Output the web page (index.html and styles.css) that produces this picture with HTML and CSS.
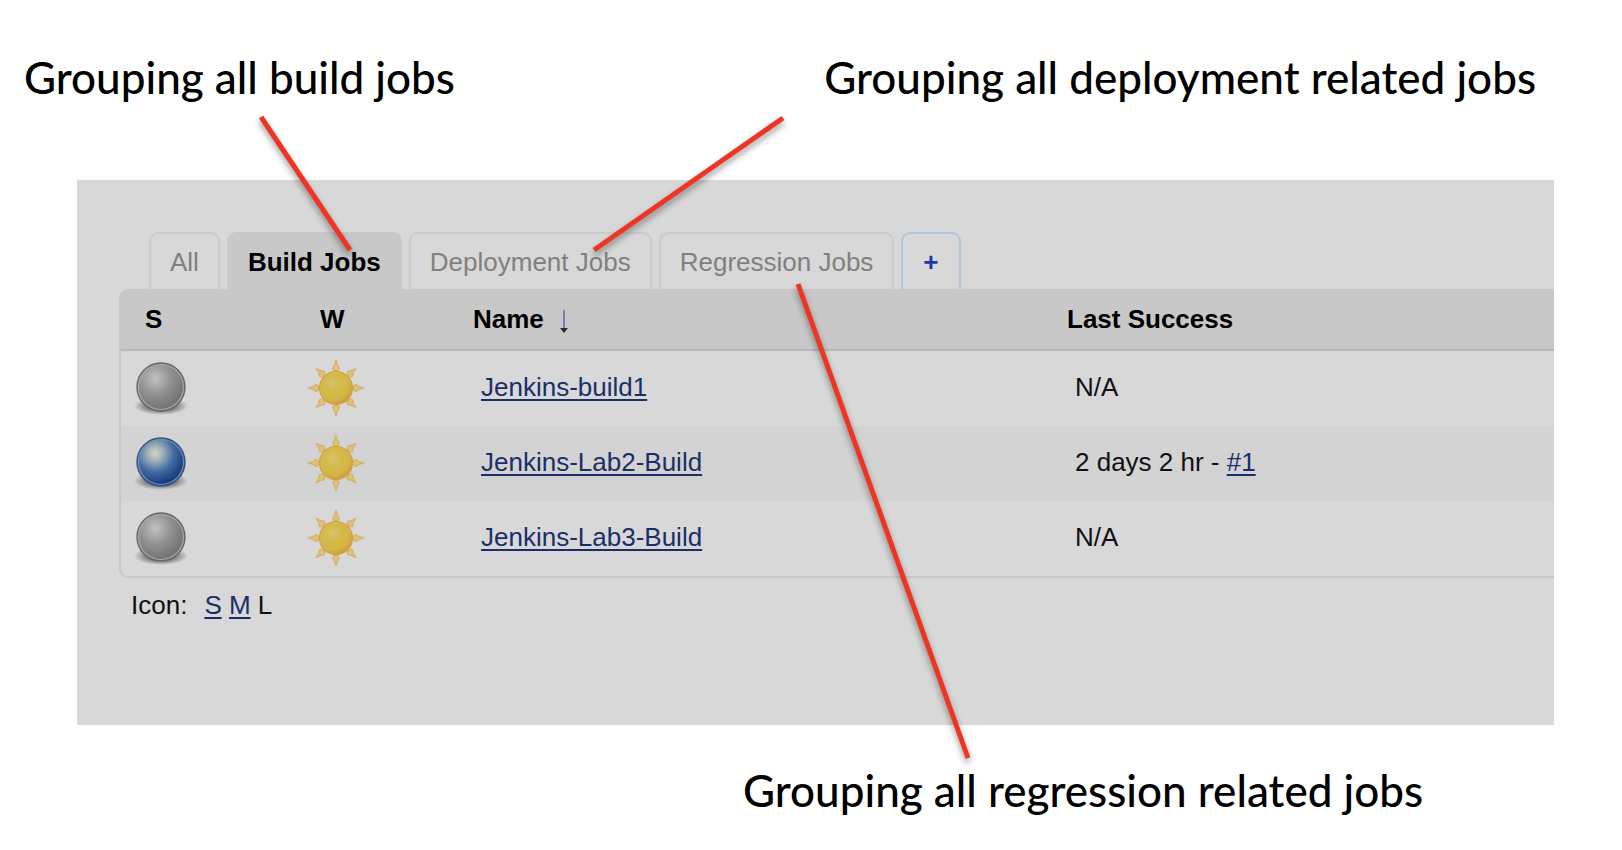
FILE: index.html
```html
<!DOCTYPE html>
<html lang="en">
<head>
<meta charset="utf-8">
<title>Jenkins views</title>
<link rel="stylesheet" href="styles.css">
</head>
<body>
<svg class="defs" width="0" height="0" aria-hidden="true">
  <defs>
    <radialGradient id="grey" cx="0.38" cy="0.32" r="0.65">
      <stop offset="0" stop-color="#c2c2c2"/>
      <stop offset="0.5" stop-color="#929292"/>
      <stop offset="1" stop-color="#727272"/>
    </radialGradient>
    <radialGradient id="blue" cx="0.38" cy="0.32" r="0.65">
      <stop offset="0" stop-color="#d6d6bc"/>
      <stop offset="0.25" stop-color="#9eb0b8"/>
      <stop offset="0.6" stop-color="#426aa2"/>
      <stop offset="1" stop-color="#173a7c"/>
    </radialGradient>
    <radialGradient id="sunfill" cx="0.4" cy="0.35" r="0.68">
      <stop offset="0" stop-color="#dac468"/>
      <stop offset="0.35" stop-color="#d5bb4c"/>
      <stop offset="0.75" stop-color="#d4b545"/>
      <stop offset="1" stop-color="#cf963a"/>
    </radialGradient>
    <radialGradient id="ground">
      <stop offset="0.5" stop-color="#777"/>
      <stop offset="1" stop-color="#777" stop-opacity="0"/>
    </radialGradient>
    <symbol id="ball-grey" viewBox="0 0 60 60">
      <ellipse cx="30" cy="49" rx="27" ry="9" fill="url(#ground)"/>
      <circle cx="30" cy="30" r="24" fill="url(#grey)" stroke="#686868" stroke-width="1.4"/>
      <circle cx="30" cy="30" r="22.5" fill="none" stroke="#a8a8a8" stroke-width="1.2"/>
    </symbol>
    <symbol id="ball-blue" viewBox="0 0 60 60">
      <ellipse cx="30" cy="49" rx="27" ry="9" fill="url(#ground)"/>
      <circle cx="30" cy="30" r="24" fill="url(#blue)" stroke="#345488" stroke-width="1.4"/>
      <circle cx="30" cy="30" r="22.5" fill="none" stroke="#7891b2" stroke-width="1.2"/>
    </symbol>
    <symbol id="sun" viewBox="0 0 60 60">
      <g fill="#d9c477" stroke="#d8b068" stroke-width="1.2" stroke-linejoin="round">
        <path id="ray" d="M30 3 L31.500 8 L33.500 11 L32 13.500 H28 L26.500 11 L28.500 8 Z"/>
        <use href="#ray" transform="rotate(45 30 31)"/>
        <use href="#ray" transform="rotate(90 30 31)"/>
        <use href="#ray" transform="rotate(135 30 31)"/>
        <use href="#ray" transform="rotate(180 30 31)"/>
        <use href="#ray" transform="rotate(225 30 31)"/>
        <use href="#ray" transform="rotate(270 30 31)"/>
        <use href="#ray" transform="rotate(315 30 31)"/>
      </g>
      <circle cx="30" cy="31" r="16.500" fill="url(#sunfill)" stroke="#d2a14a" stroke-width="1.2"/>
    </symbol>
  </defs>
</svg>

<main class="slide">
  <div class="callouts">
    <p class="callout">Grouping all build jobs</p>
    <p class="callout">Grouping all deployment related jobs</p>
  </div>

  <section class="panel">
    <nav class="tabs">
      <a class="tab" href="#all">All</a>
      <a class="tab active" href="#build">Build Jobs</a>
      <a class="tab" href="#deployment">Deployment Jobs</a>
      <a class="tab" href="#regression">Regression Jobs</a>
      <a class="tab add" href="#new">+</a>
    </nav>
    <div class="frame">
      <table class="jobs">
        <colgroup><col class="c-status"><col class="c-weather"><col class="c-name"><col></colgroup>
        <thead>
          <tr>
            <th class="h-status">S</th>
            <th class="h-weather">W</th>
            <th>Name <svg class="arrow" viewBox="0 0 10 24" aria-hidden="true"><path d="M5 0V22" stroke="#7d7dae" stroke-width="2"/><path d="M1 18H9L5 23Z" fill="#2a2a2e"/></svg></th>
            <th>Last Success</th>
          </tr>
        </thead>
        <tbody>
          <tr>
            <td class="status"><svg class="icon"><use href="#ball-grey"/></svg></td>
            <td class="weather"><svg class="icon"><use href="#sun"/></svg></td>
            <td><a href="#j1">Jenkins-build1</a></td><td>N/A</td>
          </tr>
          <tr>
            <td class="status"><svg class="icon"><use href="#ball-blue"/></svg></td>
            <td class="weather"><svg class="icon"><use href="#sun"/></svg></td>
            <td><a href="#j2">Jenkins-Lab2-Build</a></td><td>2 days 2 hr - <a href="#b1">#1</a></td>
          </tr>
          <tr>
            <td class="status"><svg class="icon"><use href="#ball-grey"/></svg></td>
            <td class="weather"><svg class="icon"><use href="#sun"/></svg></td>
            <td><a href="#j3">Jenkins-Lab3-Build</a></td><td>N/A</td>
          </tr>
        </tbody>
      </table>
    </div>
    <div class="sizes"><span class="label">Icon:</span><a href="#s">S</a> <a href="#m">M</a> L</div>
  </section>

  <p class="callout below">Grouping all regression related jobs</p>

  <svg class="pointers" aria-hidden="true">
    <g stroke="#ee3524" stroke-width="5">
      <path d="M261 117 L350 250"/>
      <path d="M783 118 L594 250"/>
      <path d="M798 284 L968 758"/>
    </g>
  </svg>
</main>
</body>
</html>
```
FILE: styles.css
```css
* { box-sizing: border-box; }

body {
  margin: 0;
  background: #fff;
  color: #111;
  font: 26px/30px "Liberation Sans", Arial, sans-serif;
}

a { color: #1a2f68; text-underline-offset: 3px; text-decoration-thickness: 2px; }

.defs { position: absolute; }

.slide { position: relative; padding: 47px 0 26px; }

.callouts {
  display: flex;
  justify-content: space-between;
  padding: 0 86px 0 24px;
}

.callout {
  margin: 0;
  color: #000;
  font: 500 44px/60px Lato, Carlito, Calibri, sans-serif;
}

.below { padding-left: 743px; margin-top: 35px; }

.panel {
  margin: 73px 68px 0 77px;
  padding: 52px 0 105px 42px;
  background: #d8d8d8;
}

.tabs { display: flex; gap: 7px; padding-left: 30px; }

.tab {
  height: 57px;
  padding: 13px 19px 0;
  border: 2px solid #cbcbcb;
  border-bottom: 0;
  border-radius: 9px 9px 0 0;
  color: #808080;
  text-decoration: none;
}

.active { border-color: #c8c8c8; background: #c8c8c8; color: #000; font-weight: bold; }
.add { padding: 13px 20px 0; border-color: #b0c6da; color: #1638a8; font-weight: bold; }

.frame {
  border: 2px solid #c8c8c8;
  border-right: 0;
  border-radius: 9px 0 0 9px;
  overflow: hidden;
}

.jobs { width: 100%; table-layout: fixed; border-collapse: separate; border-spacing: 0; }
.c-status { width: 171px; }
.c-weather { width: 165px; }
.c-name { width: 594px; }

.jobs th {
  height: 60px;
  padding: 0 0 2px 16px;
  border-bottom: 2px solid #b8b8b8;
  background: #c8c8c8;
  color: #000;
  text-align: left;
}

.jobs .h-status { padding-left: 24px; }
.jobs .h-weather { padding-left: 28px; }
.arrow { width: 10px; height: 24px; margin-left: 8px; vertical-align: -6px; }

.jobs td { height: 75px; padding: 0 0 4px 24px; }
.jobs tr:nth-child(even) td { background: #d3d3d3; }
.jobs .status { padding-left: 10px; }
.jobs .weather { padding-left: 14px; }
.icon { display: block; width: 60px; height: 60px; }

.sizes { padding: 12px 0 0 12px; }
.label { margin-right: 17px; }

.pointers {
  position: absolute;
  top: 0;
  left: 0;
  width: 100%;
  height: 100%;
  pointer-events: none;
  filter: drop-shadow(0 4px 3px rgba(0, 0, 0, 0.4));
}
```
